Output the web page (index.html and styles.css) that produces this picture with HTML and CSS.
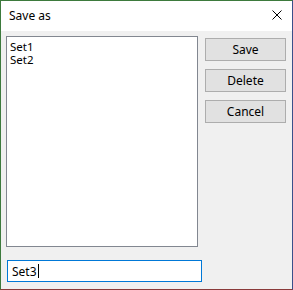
FILE: index.html
```html
<!DOCTYPE html>
<html lang="en">
<head>
    <meta charset="UTF-8">
    <title>Save as</title>
    <link rel="stylesheet" href="styles.css">
</head>
<body>
    <div class="dialog">
        <div class="title-bar">
            <span class="title">Save as</span>
            <span class="close">
                <svg width="10" height="10" viewBox="0 0 10 10">
                    <path d="M0.5 0.5 L9.5 9.5 M9.5 0.5 L0.5 9.5" stroke="#000" stroke-width="1" fill="none"/>
                </svg>
            </span>
        </div>
        <div class="client">
            <div class="main-row">
                <ul class="set-list">
                    <li>Set1</li>
                    <li>Set2</li>
                </ul>
                <div class="buttons">
                    <button class="btn">Save</button>
                    <button class="btn">Delete</button>
                    <button class="btn">Cancel</button>
                </div>
            </div>
            <div class="name-box"><span>Set3</span><span class="caret"></span></div>
        </div>
    </div>
</body>
</html>
```

FILE: styles.css
```css
body {
    margin: 0;
    font-family: "Noto Sans", "Open Sans", sans-serif;
    font-size: 12px;
    color: #000;
}
.dialog {
    width: 293px;
    height: 290px;
    box-sizing: border-box;
    border: 1px solid #3d7a3d;
    border-right-color: #3a4f8a;
    border-bottom-color: #8a3a3a;
    display: flex;
    flex-direction: column;
    background-color: #f0f0f0;
}
.title-bar {
    height: 30px;
    background-color: white;
    display: flex;
    align-items: center;
    justify-content: space-between;
    padding: 0 10px 0 8px;
}
.title {
    font-size: 12px;
    padding-bottom: 1px;
}
.close {
    display: flex;
    margin-top: -2px;
}
.client {
    flex-grow: 1;
    padding: 5px 0 0 5px;
}
.main-row {
    display: flex;
    gap: 7px;
}
.set-list {
    list-style-type: none;
    margin: 0;
    padding: 3px 3px;
    width: 192px;
    height: 211px;
    box-sizing: border-box;
    background-color: white;
    border: 1px solid #828790;
}
.set-list li {
    font-size: 11.5px;
    line-height: 13px;
    height: 13px;
}
.buttons {
    display: flex;
    flex-direction: column;
    gap: 8px;
    padding-top: 2px;
}
.btn {
    width: 81px;
    height: 23px;
    padding: 0;
    font-family: inherit;
    font-size: 12px;
    color: #000;
    background-color: #e1e1e1;
    border: 1px solid #adadad;
    border-radius: 0;
}
.name-box {
    margin: 13px 0 0 1px;
    width: 195px;
    height: 22px;
    box-sizing: border-box;
    background-color: white;
    border: 1px solid #0078d7;
    display: flex;
    align-items: center;
    padding-left: 4px;
}
.caret {
    width: 1px;
    height: 14px;
    background-color: #000;
    margin-left: 1px;
}
```
